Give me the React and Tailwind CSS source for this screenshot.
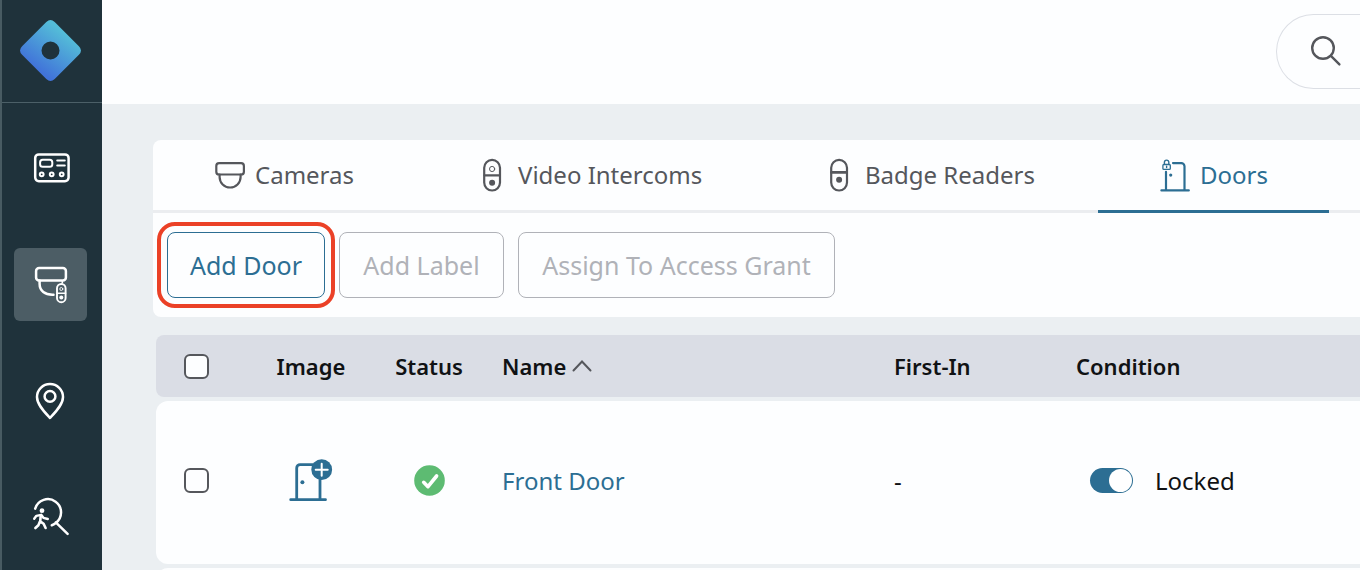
import { useState } from 'react';
import clsx from 'clsx';

/* ── Icons ── */

function LogoIcon() {
  return (
    <svg width="61" height="61" viewBox="0.5 0.5 61 61" aria-hidden="true">
      <defs>
        <linearGradient id="logo" x1="0.28" y1="0.8" x2="0.72" y2="0.2">
          <stop offset="0" stopColor="#4173d9" />
          <stop offset="1" stopColor="#54bdd8" />
        </linearGradient>
      </defs>
      <path
        fill="url(#logo)"
        fillRule="evenodd"
        d="M26.8 2.6Q31-1.6 35.2 2.6L59.4 26.8Q63.6 31 59.4 35.2L35.2 59.4Q31 63.6 26.8 59.4L2.6 35.2Q-1.6 31 2.600 26.8zM31 22a9 9 0 1 0 0 18a9 9 0 0 0 0-18z"
      />
    </svg>
  );
}

function NavIcon({ children }) {
  return (
    <svg width="41" height="41" viewBox="0 0 41 41" fill="none" stroke="currentColor"
      strokeWidth="2.5" strokeLinecap="round" strokeLinejoin="round" aria-hidden="true">
      {children}
    </svg>
  );
}

function PanelIcon() {
  return (
    <NavIcon>
      <rect x="5.2" y="6.4" width="33.4" height="26.8" rx="3.6" />
      <rect x="10.1" y="11.8" width="12.2" height="7" rx="2.6" strokeWidth="2" />
      <path d="M27.2 12.4h7.6M27.2 17.4h7.6" strokeWidth="2" />
      <circle cx="11.7" cy="26.3" r="1.9" strokeWidth="2" />
      <circle cx="21.7" cy="26.3" r="1.9" strokeWidth="2" />
      <circle cx="31.7" cy="26.3" r="1.9" strokeWidth="2" />
    </NavIcon>
  );
}

function DevicesIcon() {
  return (
    <NavIcon>
      <rect x="6.1" y="4.1" width="29.8" height="12.3" rx="3" />
      <path d="M9.6 16.6v3.2c0 7 5.2 11.4 13.9 11" />
      <rect x="27" y="20" width="8.6" height="18.2" rx="4.3" strokeWidth="1.9" />
      <path d="M27 29.2h8.6" strokeWidth="1.5" />
      <circle cx="31.3" cy="25" r="1.5" strokeWidth="0.9" />
      <circle cx="31.3" cy="33.6" r="2" fill="currentColor" stroke="none" />
      <path d="M32.3 17v2" strokeWidth="1.6" />
    </NavIcon>
  );
}

function PinIcon() {
  return (
    <NavIcon>
      <path d="M20 38C14.5 32 7 24.6 7 17a13 13 0 0 1 26 0C33 24.6 25.5 32 20 38z" />
      <circle cx="20" cy="16.4" r="5.4" />
    </NavIcon>
  );
}

function PersonSearchIcon() {
  return (
    <NavIcon>
      <path d="M5.2 12.6A13.2 13.2 0 1 1 25.4 27.2Q23.8 28.6 21.8 29.3M25.8 26.4L37.6 37.8" />
      <circle cx="12" cy="14.7" r="2.4" fill="currentColor" stroke="none" />
      <path d="M4.2 22.8L6.4 19.8L11.2 18.8L13.4 21.8L17.8 23" strokeWidth="2.4" />
      <path d="M10.8 19.2L10.2 25.4L13.6 27.8L15.6 32M9.8 25.8L8.4 29.2L5.4 32" strokeWidth="2.6" />
    </NavIcon>
  );
}

function TabIcon({ children }) {
  return (
    <svg width="30" height="34" viewBox="0 0 30 34" fill="none" stroke="currentColor"
      strokeWidth="2.2" strokeLinecap="round" aria-hidden="true" className="shrink-0">
      {children}
    </svg>
  );
}

function CameraIcon() {
  return (
    <TabIcon>
      <rect x="1.3" y="5.1" width="27.6" height="11.4" rx="2.8" />
      <path d="M4.6 16.6v2.4a10.5 10.5 0 0 0 21 0v-2.4" />
    </TabIcon>
  );
}

function IntercomIcon() {
  return (
    <TabIcon>
      <rect x="6.2" y="1.9" width="15.8" height="30.6" rx="7.9" />
      <path d="M6.5 17.3h15" />
      <circle cx="14.1" cy="11" r="2.6" strokeWidth="1" />
      <circle cx="14.1" cy="24.7" r="3" fill="currentColor" stroke="none" />
    </TabIcon>
  );
}

function BadgeReaderIcon() {
  return (
    <TabIcon>
      <rect x="6.2" y="1.9" width="15.8" height="30.6" rx="7.9" />
      <path d="M6.5 14.4h15" strokeWidth="2.8" />
      <circle cx="14.1" cy="21.8" r="3" fill="currentColor" stroke="none" />
    </TabIcon>
  );
}

function DoorLockIcon() {
  return (
    <TabIcon>
      <path d="M6 13.8v18.4M1.4 32.4h27.4M13 5.1h8.3a3.2 3.2 0 0 1 3.2 3.2v23.9" strokeLinejoin="round" />
      <rect x="2.9" y="6.5" width="7.4" height="4.9" rx="1" strokeWidth="1.3" />
      <path d="M4.4 6.3v-2a2.2 2.2 0 0 1 4.4 0v2M6.6 8.3v1.3" strokeWidth="1.4" />
      <circle cx="10.7" cy="17.1" r="1.6" fill="currentColor" stroke="none" />
    </TabIcon>
  );
}

function DoorAddIcon() {
  return (
    <svg width="44" height="44" viewBox="0 0 44 44" fill="none" strokeLinecap="round" aria-hidden="true">
      <path d="M7.7 40V9a3.4 3.4 0 0 1 3.4-3.4H27.6a3.4 3.4 0 0 1 3.4 3.4v31M1.7 40.7H36.5" stroke="#2c6e93" strokeWidth="2.8" />
      <circle cx="13.4" cy="23.3" r="2" fill="#2c6e93" />
      <circle cx="32.7" cy="10.7" r="10.4" fill="#2c6e93" />
      <path d="M32.7 4.7v12M26.7 10.7h12" stroke="#fff" strokeWidth="2" />
    </svg>
  );
}

function StatusOkIcon() {
  return (
    <svg width="31" height="31" viewBox="0 0 31 31" fill="none" role="img" aria-label="Online">
      <circle cx="15.5" cy="15.5" r="15.3" fill="#5dbb72" />
      <path d="M9.7 17.3L14 21.7L22.6 11" stroke="#fff" strokeWidth="3.6" strokeLinecap="round" strokeLinejoin="round" />
    </svg>
  );
}

/* ── Data ── */

const navItems = [
  { label: 'Dashboard',   Icon: PanelIcon },
  { label: 'Devices',     Icon: DevicesIcon, active: true },
  { label: 'Sites',       Icon: PinIcon },
  { label: 'Investigate', Icon: PersonSearchIcon },
];

const tabs = [
  { id: 'cameras',   label: 'Cameras',         Icon: CameraIcon,      width: 'w-[263px]' },
  { id: 'intercoms', label: 'Video Intercoms', Icon: IntercomIcon,    width: 'w-[347px]' },
  { id: 'readers',   label: 'Badge Readers',   Icon: BadgeReaderIcon, width: 'w-[335px]' },
  { id: 'doors',     label: 'Doors',           Icon: DoorLockIcon,    width: 'w-[231px]' },
];

const doors = [{ id: 1, name: 'Front Door', firstIn: '-', locked: true }];

const checkboxClass =
  'block size-[25px] appearance-none rounded-md border-2 border-[#55575c] bg-[#fdfeff] checked:bg-[#2c6e93]';

/* ── Sections ── */

function Sidebar() {
  return (
    <aside className="w-[102px] shrink-0 border-l-2 border-[#485b62] bg-[#1f323b] text-white">
      <a href="#home" aria-label="Home" className="flex h-[103px] items-center justify-center border-b border-[#4c6068] pr-[3px] pb-[2px]">
        <LogoIcon />
      </a>
      <nav className="flex flex-col items-center gap-[43px] pt-[29px] pr-[3px]">
        {navItems.map(({ label, Icon, active }) => (
          <a
            key={label}
            href={`#${label.toLowerCase()}`}
            aria-label={label}
            className={clsx('flex size-[73px] items-center justify-center rounded-md', active && 'bg-[#4c5d65]')}
          >
            <Icon />
          </a>
        ))}
      </nav>
    </aside>
  );
}

function TopBar() {
  return (
    <header className="flex h-[104px] justify-end bg-[#fdfeff] pt-[14px]">
      <form className="flex h-[75px] w-[84px] items-center overflow-hidden rounded-l-full border border-r-0 border-[#dcdfe5] pl-[33px]">
        <svg width="34" height="34" viewBox="0 0 34 34" fill="none" stroke="#55575c" strokeWidth="2.4" strokeLinecap="round" aria-hidden="true" className="shrink-0">
          <circle cx="13" cy="13" r="10.8" />
          <path d="M20.9 20.9L29.4 29.4" />
        </svg>
        <input type="search" aria-label="Search" className="w-full min-w-0 outline-none" />
      </form>
    </header>
  );
}

function DeviceTabs({ current, onSelect }) {
  return (
    <div role="tablist" className="flex border-b-3 border-[#ebedf0]">
      {tabs.map(({ id, label, Icon, width }) => (
        <button
          key={id}
          type="button"
          role="tab"
          aria-selected={current === id}
          onClick={() => onSelect(id)}
          className={clsx(
            '-mb-[3px] flex h-[73px] shrink-0 items-center gap-[10px] border-b-3 pl-[62px] whitespace-nowrap',
            width,
            current === id ? 'border-[#2c6e93] text-[#2c6e93]' : 'border-transparent text-[#55575c]',
          )}
        >
          <Icon />
          {label}
        </button>
      ))}
    </div>
  );
}

function Toolbar() {
  return (
    <div className="flex gap-[14px] px-[14px] py-[19px] text-[25px]">
      <button type="button" className="h-[66px] w-[158px] rounded-lg border border-[#2c6e93] text-[#2c6e93] outline-4 outline-offset-6 outline-[#eb4127]">
        Add Door
      </button>
      <button type="button" disabled className="h-[66px] w-[165px] rounded-lg border border-[#b0b2b8] text-[#b0b2b8]">
        Add Label
      </button>
      <button type="button" disabled className="h-[66px] w-[317px] rounded-lg border border-[#b0b2b8] text-[#b0b2b8]">
        Assign To Access Grant
      </button>
    </div>
  );
}

function DoorTable() {
  return (
    <table className="w-full table-fixed border-separate border-spacing-x-0 border-spacing-y-1 text-left">
      <thead className="text-[22px] text-[#101214]">
        <tr className="h-[62px] *:bg-[#dadde5] *:font-semibold">
          <th className="w-[80px] rounded-l-lg pl-7">
            <input type="checkbox" aria-label="Select all doors" className={checkboxClass} />
          </th>
          <th className="w-[150px] text-center">Image</th>
          <th className="w-[86px] text-center">Status</th>
          <th className="w-[392px] pl-[30px]" aria-sort="ascending">
            <button type="button" className="flex items-center gap-1.5">
              Name
              <svg width="20" height="12" viewBox="0 0 20 12" fill="none" stroke="#55575c" strokeWidth="2" strokeLinecap="round" aria-hidden="true">
                <path d="M1.5 10.5L10 1.500L18.5 10.5" />
              </svg>
            </button>
          </th>
          <th className="w-[182px] pl-[30px]">First-In</th>
          <th className="pl-[30px]">Condition</th>
        </tr>
      </thead>
      <tbody className="text-[#101214]">
        {doors.map((door) => (
          <tr key={door.id} className="h-[163px] *:bg-[#fdfeff] *:pb-1">
            <td className="rounded-l-xl pl-7">
              <input type="checkbox" aria-label={`Select ${door.name}`} className={checkboxClass} />
            </td>
            <td>
              <button type="button" aria-label="Add image" className="mx-auto block">
                <DoorAddIcon />
              </button>
            </td>
            <td>
              <div className="flex justify-center">
                <StatusOkIcon />
              </div>
            </td>
            <td className="pl-[30px]">
              <a href="#front-door" className="text-[#2c6e93]">{door.name}</a>
            </td>
            <td className="pl-[30px]">{door.firstIn}</td>
            <td className="pl-[44px]">
              <label className="flex items-center gap-[22px]">
                <input
                  type="checkbox"
                  role="switch"
                  defaultChecked={door.locked}
                  className="flex h-[25px] w-[43px] appearance-none items-center rounded-full bg-[#a9adb5] px-px before:size-[23px] before:rounded-full before:bg-white checked:justify-end checked:bg-[#2c6e93]"
                />
                Locked
              </label>
            </td>
          </tr>
        ))}
        <tr className="h-[163px]">
          <td colSpan={6} className="rounded-l-xl bg-[#fdfeff]" />
        </tr>
      </tbody>
    </table>
  );
}

export default function App() {
  const [tab, setTab] = useState('doors');

  return (
    <div className="flex h-screen overflow-hidden bg-[#ebeff2] font-['Noto_Sans',sans-serif] text-[24px] leading-8">
      <Sidebar />
      <div className="min-w-0 flex-1">
        <TopBar />
        <main className="pt-9 pl-[51px]">
          <section className="overflow-hidden rounded-l-lg bg-[#fdfeff]">
            <DeviceTabs current={tab} onSelect={setTab} />
            <Toolbar />
          </section>
          <section className="pt-[14px] pl-[3px]">
            <DoorTable />
          </section>
        </main>
      </div>
    </div>
  );
}
